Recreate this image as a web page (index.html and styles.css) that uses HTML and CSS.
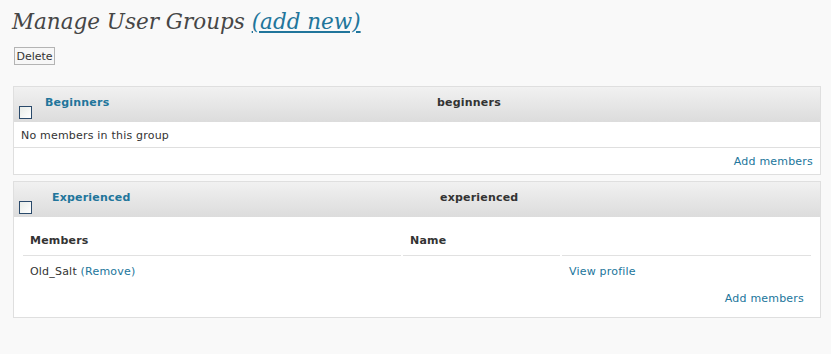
FILE: index.html
```html
<!DOCTYPE html>
<html>
  <head>
    <meta charset="utf-8">
    <title>Manage User Groups</title>
    <meta name="viewport" content="width=device-width, initial-scale=1">
    <link rel="stylesheet" href="styles.css">
  </head>
  <body>
    <div class="wrap">
      <h2>Manage User Groups <a href="#">(add new)</a></h2>
      <p class="actions"><button type="button" class="btn">Delete</button></p>

      <div class="group">
        <div class="group-head beg">
          <span class="cell-check"><input type="checkbox" class="check"></span>
          <a href="#" class="group-name">Beginners</a>
          <span class="group-slug">beginners</span>
        </div>
        <div class="group-row">No members in this group</div>
        <div class="group-foot"><a href="#">Add members</a></div>
      </div>

      <div class="group">
        <div class="group-head exp">
          <span class="cell-check"><input type="checkbox" class="check"></span>
          <a href="#" class="group-name">Experienced</a>
          <span class="group-slug">experienced</span>
        </div>
        <div class="group-body">
          <table class="members">
            <thead>
              <tr>
                <th class="col-member">Members</th>
                <th class="col-name">Name</th>
                <th></th>
              </tr>
            </thead>
            <tbody>
              <tr>
                <td>Old_Salt <a href="#">(Remove)</a></td>
                <td></td>
                <td><a href="#">View profile</a></td>
              </tr>
            </tbody>
          </table>
          <div class="add-row"><a href="#">Add members</a></div>
        </div>
      </div>
    </div>
  </body>
</html>
```

FILE: styles.css
```css
body {
  margin: 0;
  background-color: #f9f9f9;
  font-family: "DejaVu Sans", Verdana, sans-serif;
  font-size: 11px;
  line-height: 13px;
  letter-spacing: 0.2px;
  color: #333;
}

a {
  color: #21759b;
  text-decoration: none;
}

.wrap {
  padding: 0 10px 0 13px;
}

h2 {
  margin: 0 0 0 -1px;
  padding: 8px 0 0;
  height: 32px;
  font-family: "DejaVu Serif", Georgia, serif;
  font-style: italic;
  font-weight: normal;
  font-size: 21.5px;
  line-height: 28px;
  letter-spacing: 0;
  color: #464646;
}

h2 a {
  text-decoration: underline;
}

.actions {
  margin: 7px 0 0 1px;
  height: 39px;
}

.btn {
  font-family: "DejaVu Sans", Verdana, sans-serif;
  font-size: 11px;
  color: #333;
  background-color: #f7f7f7;
  border: 1px solid #b4b4b4;
  border-radius: 0;
  padding: 0 1px;
  width: 41px;
  height: 18px;
}

.group {
  width: 806px;
  background-color: #fff;
  border: 1px solid #dfdfdf;
  margin-bottom: 6px;
}

.group-head {
  display: grid;
  height: 35px;
  background: linear-gradient(#f1f1f1, #dcdcdc);
}

.group-head.beg {
  grid-template-columns: 31px 392px 1fr;
}

.group-head.exp {
  grid-template-columns: 38px 388px 1fr;
}

.cell-check {
  align-self: end;
  padding: 0 0 3px 5px;
}

.check {
  appearance: none;
  -webkit-appearance: none;
  display: block;
  margin: 0;
  width: 13px;
  height: 13px;
  border: 1px solid #2a4a6b;
  background: linear-gradient(135deg, #e8ece8, #fff);
}

.group-name,
.group-slug {
  padding-top: 9px;
  font-weight: bold;
}

.group-slug {
  color: #333;
}

.group-row {
  padding: 7px 7px 5px;
  border-bottom: 1px solid #dfdfdf;
}

.group-foot {
  padding: 7px 7px 6px;
  text-align: right;
}

.group-body {
  padding: 8px 9px 12px;
}

.members {
  border-collapse: separate;
  border-spacing: 2px 0;
  margin: 0 -2px;
  width: calc(100% + 4px);
}

.members th {
  text-align: left;
  padding: 9px 7px 8px;
  border-bottom: 1px solid #e1e1e1;
}

.col-member {
  width: 364px;
}

.col-name {
  width: 143px;
}

.members td {
  padding: 9px 7px 8px;
}

.add-row {
  margin-top: 6px;
  padding-right: 7px;
  text-align: right;
}
```
